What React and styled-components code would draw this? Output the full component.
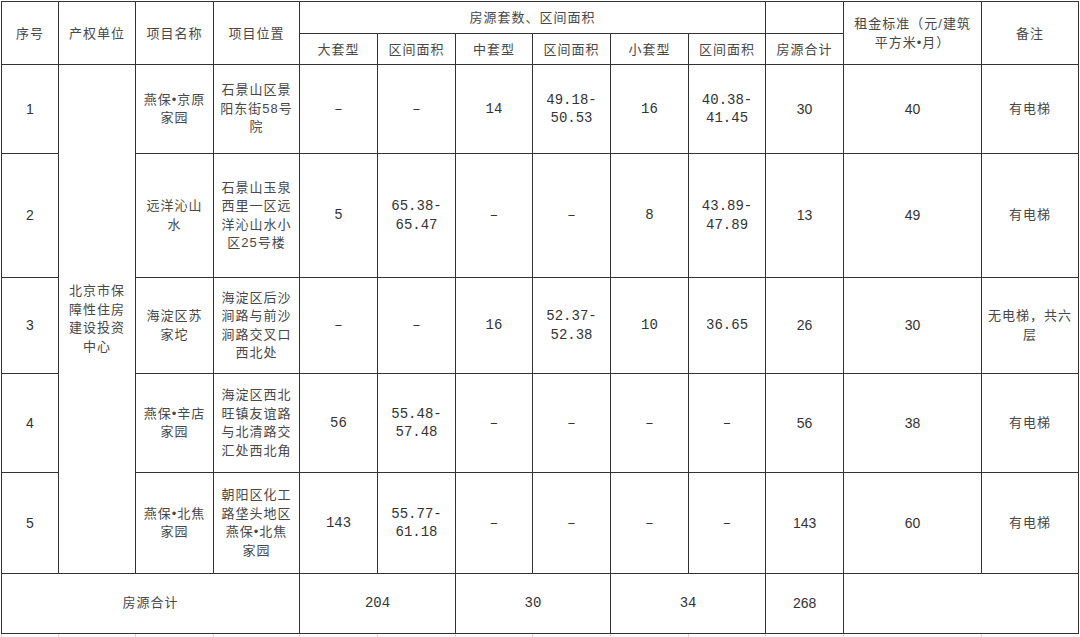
import React from 'react';
import styled, { createGlobalStyle } from 'styled-components';

const widths = [57, 77, 78, 86, 78, 78, 77, 78, 78, 77, 78, 138, 97];

const rows = [
    {
        no: '1', h: 89,
        name: ['燕保•京原', '家园'],
        loc: ['石景山区景', '阳东街58号', '院'],
        big: '–', bigArea: ['–'], mid: '14', midArea: ['49.18-', '50.53'],
        small: '16', smallArea: ['40.38-', '41.45'],
        total: '30', rent: '40', note: ['有电梯'],
    },
    {
        no: '2', h: 124,
        name: ['远洋沁山', '水'],
        loc: ['石景山玉泉', '西里一区远', '洋沁山水小', '区25号楼'],
        big: '5', bigArea: ['65.38-', '65.47'], mid: '–', midArea: ['–'],
        small: '8', smallArea: ['43.89-', '47.89'],
        total: '13', rent: '49', note: ['有电梯'],
    },
    {
        no: '3', h: 96,
        name: ['海淀区苏', '家坨'],
        loc: ['海淀区后沙', '涧路与前沙', '涧路交叉口', '西北处'],
        big: '–', bigArea: ['–'], mid: '16', midArea: ['52.37-', '52.38'],
        small: '10', smallArea: ['36.65'],
        total: '26', rent: '30', note: ['无电梯，共六', '层'],
    },
    {
        no: '4', h: 99,
        name: ['燕保•辛店', '家园'],
        loc: ['海淀区西北', '旺镇友谊路', '与北清路交', '汇处西北角'],
        big: '56', bigArea: ['55.48-', '57.48'], mid: '–', midArea: ['–'],
        small: '–', smallArea: ['–'],
        total: '56', rent: '38', note: ['有电梯'],
    },
    {
        no: '5', h: 101,
        name: ['燕保•北焦', '家园'],
        loc: ['朝阳区化工', '路垡头地区', '燕保•北焦', '家园'],
        big: '143', bigArea: ['55.77-', '61.18'], mid: '–', midArea: ['–'],
        small: '–', smallArea: ['–'],
        total: '143', rent: '60', note: ['有电梯'],
    },
];

const Lines = ({ items }) => items.map((t, i) => <Line key={i}>{t}</Line>);

export default function App() {
    return (
        <Page>
            <GlobalStyle />
            <Sheet>
                <colgroup>
                    {widths.map((w, i) => <col key={i} style={{ width: w }} />)}
                </colgroup>
                <thead>
                    <Row $h={32}>
                        <Head rowSpan={2}>序号</Head>
                        <Head rowSpan={2}>产权单位</Head>
                        <Head rowSpan={2}>项目名称</Head>
                        <Head rowSpan={2}>项目位置</Head>
                        <Head colSpan={6}>房源套数、区间面积</Head>
                        <Head />
                        <Head rowSpan={2}>
                            <Line>租金标准（元/建筑</Line>
                            <Line>平方米•月）</Line>
                        </Head>
                        <Head rowSpan={2}>备注</Head>
                    </Row>
                    <Row $h={31}>
                        <Head>大套型</Head>
                        <Head>区间面积</Head>
                        <Head>中套型</Head>
                        <Head>区间面积</Head>
                        <Head>小套型</Head>
                        <Head>区间面积</Head>
                        <Head>房源合计</Head>
                    </Row>
                </thead>
                <tbody>
                    {rows.map((r, i) => (
                        <Row key={r.no} $h={r.h}>
                            <Cell $font="sans">{r.no}</Cell>
                            {i === 0 && (
                                <Cell rowSpan={5}>
                                    <Lines items={['北京市保', '障性住房', '建设投资', '中心']} />
                                </Cell>
                            )}
                            <Cell><Lines items={r.name} /></Cell>
                            <Cell><Lines items={r.loc} /></Cell>
                            <Cell $font="mono">{r.big}</Cell>
                            <Cell $font="mono"><Lines items={r.bigArea} /></Cell>
                            <Cell $font="mono">{r.mid}</Cell>
                            <Cell $font="mono"><Lines items={r.midArea} /></Cell>
                            <Cell $font="mono">{r.small}</Cell>
                            <Cell $font="mono"><Lines items={r.smallArea} /></Cell>
                            <Cell $font="sans">{r.total}</Cell>
                            <Cell $font="sans">{r.rent}</Cell>
                            <Cell><Lines items={r.note} /></Cell>
                        </Row>
                    ))}
                    <Row $h={60}>
                        <Cell colSpan={4}>房源合计</Cell>
                        <Cell colSpan={2} $font="mono">204</Cell>
                        <Cell colSpan={2} $font="mono">30</Cell>
                        <Cell colSpan={2} $font="mono">34</Cell>
                        <Cell $font="sans">268</Cell>
                        <Cell colSpan={2} />
                    </Row>
                </tbody>
            </Sheet>
            <Tail>
                {widths.map((w, i) => <TailCol key={i} />)}
            </Tail>
        </Page>
    );
}

const GlobalStyle = createGlobalStyle`
    html, body {
        margin:0;
        padding:0;
        background:#fff;
    }
`

const Page = styled.div`
    width:1080px;
    height:637px;
    overflow:hidden;
    padding:1px 0 0 1px;
    box-sizing:border-box;
`

const Sheet = styled.table`
    border-collapse:collapse;
    table-layout:fixed;
    width:1077px;
`

const Row = styled.tr`
    height:${props => props.$h}px;
`

const fonts = {
    cjk: `"Liberation Sans", "Noto Sans CJK SC", sans-serif`,
    mono: `"Liberation Mono", "Noto Sans CJK SC", monospace`,
    sans: `"Liberation Sans", Arial, sans-serif`,
}

const Cell = styled.td`
    border:1px solid #333;
    padding:0 3px;
    text-align:center;
    vertical-align:middle;
    color:${props => props.$font ? '#333' : '#484848'};
    font-family:${props => fonts[props.$font || 'cjk']};
    font-size:${props => props.$font === 'mono' ? '14px' : props.$font === 'sans' ? '14px' : '13px'};
    font-weight:normal;
    letter-spacing:${props => props.$font ? '0' : '1px'};
    line-height:18.5px;
    white-space:nowrap;
`

const Head = styled(Cell).attrs({ as: 'th' })`
    line-height:19px;
`

const Line = styled.span`
    display:block;
    white-space:nowrap;
`

const Tail = styled.div`
    display:grid;
    grid-template-columns:${widths.map(w => w + 'px').join(' ')};
    height:4px;
`

const TailCol = styled.div`
    border-left:1px solid #d4d4d4;
`
